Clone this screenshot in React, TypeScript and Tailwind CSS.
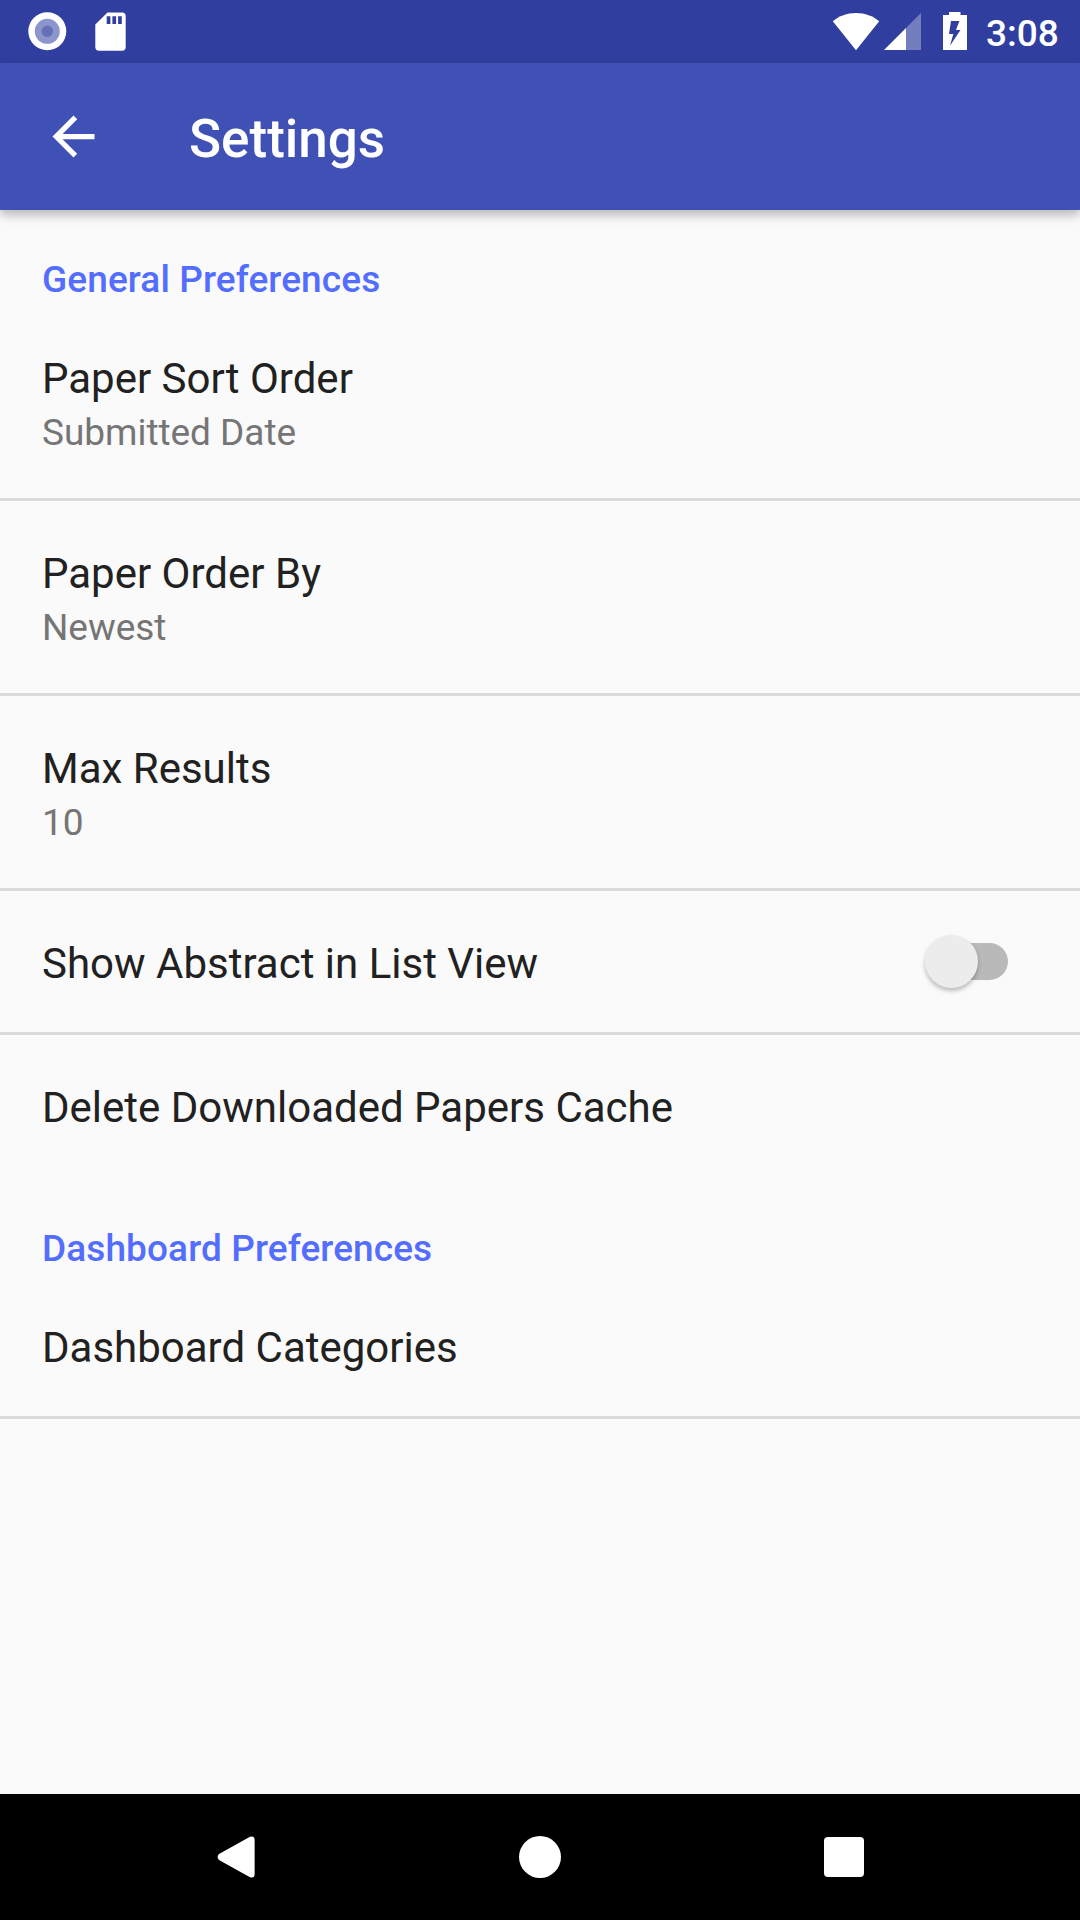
import React from "react";

function StatusBar() {
  return (
    <div className="flex h-[63px] items-start justify-between bg-[#303f9f] text-white">
      <div className="flex">
        <svg width="140" height="63" viewBox="0 0 140 63">
          <circle cx="47.3" cy="31.3" r="19" fill="#fff" />
          <circle cx="47.3" cy="31.3" r="12.5" fill="#8c95cc" />
          <circle cx="47.3" cy="31.3" r="5.7" fill="#6670b8" />
          <path
            fill="#fff"
            fillRule="evenodd"
            d="M107.5 12.5H122a3.7 3.7 0 0 1 3.7 3.7V47a3.7 3.7 0 0 1-3.7 3.7H99A3.7 3.7 0 0 1 95.3 47V24.5ZM106.7 16.3v7.7h3.7v-7.7ZM112.4 16.3v7.7h3.7v-7.7ZM118.1 16.3v7.7h3.7v-7.7Z"
          />
        </svg>
      </div>
      <div className="flex">
        <svg width="156" height="63" viewBox="830 0 156 63">
          <path fill="#fff" d="M832.8 21.3C839 16 847 13 856 13s17 3 23.2 8.3L856 50.2Z" />
          <path fill="#fff" fillOpacity="0.33" d="M921 13v37h-15V28Z" />
          <path fill="#fff" d="M906 28v22h-22Z" />
          <path
            fill="#fff"
            fillRule="evenodd"
            d="M949 12h11.5v3h6.5v35h-24V15h6ZM951 21l-2 13h4.3L950 45.8 960.5 30H956l3.4-9Z"
          />
        </svg>
        <span className="mt-[12px] mr-[22px] h-[43px] w-[72px] text-[37px] leading-[43px] font-medium whitespace-nowrap">
          3:08
        </span>
      </div>
    </div>
  );
}

function AppBar() {
  return (
    <header className="relative z-10 flex h-[147px] items-center bg-[#3f51b5] pl-[42px] text-white shadow-[0_5px_10px_rgba(0,0,0,0.27)]">
      <svg width="63" height="63" viewBox="0 0 24 24" fill="currentColor">
        <path d="M20 11H7.83l5.59-5.59L12 4l-8 8 8 8 1.41-1.41L7.83 13H20v-2z" />
      </svg>
      <h1 className="mt-[5px] ml-[84px] text-[53px] leading-[62px] font-medium">Settings</h1>
    </header>
  );
}

function SectionHeader({ children }: { children: React.ReactNode }) {
  return (
    <h2 className="pt-[48px] pb-[5px] pl-[42px] text-[37px] leading-[43px] font-medium tracking-[0.1px] text-[#536dfe]">
      {children}
    </h2>
  );
}

type RowProps = {
  title: string;
  summary?: string;
  divider?: boolean;
  children?: React.ReactNode;
};

function PreferenceRow({ title, summary, divider = true, children }: RowProps) {
  return (
    <div className={divider ? "border-b-[3px] border-[#dadada]" : ""}>
      <div className="flex justify-between pt-[48px] pr-[72px] pb-[44px] pl-[42px]">
        <div>
          <div className="text-[42px] leading-[49px] text-[#212121]">{title}</div>
          {summary && (
            <div className="mt-[8px] text-[37px] leading-[43px] tracking-[-0.04px] text-[#757575]">{summary}</div>
          )}
        </div>
        {children}
      </div>
    </div>
  );
}

function Switch() {
  return (
    <div className="relative mt-[4px] h-[37px] w-[75px] rounded-full bg-[#b9b9b9]">
      <div className="absolute top-[-8px] left-[-8px] size-[53px] rounded-full bg-[#ececec] shadow-[0_3px_4px_rgba(0,0,0,0.25)]" />
    </div>
  );
}

function NavBar() {
  return (
    <nav className="flex h-[126px] items-center bg-black text-white">
      <svg className="ml-[217px]" width="38" height="42" viewBox="0 0 38 42" fill="currentColor">
        <path d="M2 18 33 .8Q37.6-.8 37.6 4v34q0 4.8-4.6 3.2L2 24Q-.8 21 2 18Z" />
      </svg>
      <div className="ml-[264px] size-[42px] rounded-full bg-white" />
      <div className="ml-[263px] size-[40px] rounded-[4px] bg-white" />
    </nav>
  );
}

export default function App() {
  return (
    <div className="flex h-[1920px] w-[1080px] flex-col overflow-hidden bg-[#fafafa] font-['Roboto',sans-serif]">
      <StatusBar />
      <AppBar />
      <main className="flex-1">
        <SectionHeader>General Preferences</SectionHeader>
        <PreferenceRow title="Paper Sort Order" summary="Submitted Date" />
        <PreferenceRow title="Paper Order By" summary="Newest" />
        <PreferenceRow title="Max Results" summary="10" />
        <PreferenceRow title="Show Abstract in List View">
          <Switch />
        </PreferenceRow>
        <PreferenceRow title="Delete Downloaded Papers Cache" divider={false} />
        <div className="pt-[3px]">
          <SectionHeader>Dashboard Preferences</SectionHeader>
        </div>
        <PreferenceRow title="Dashboard Categories" />
      </main>
      <NavBar />
    </div>
  );
}
